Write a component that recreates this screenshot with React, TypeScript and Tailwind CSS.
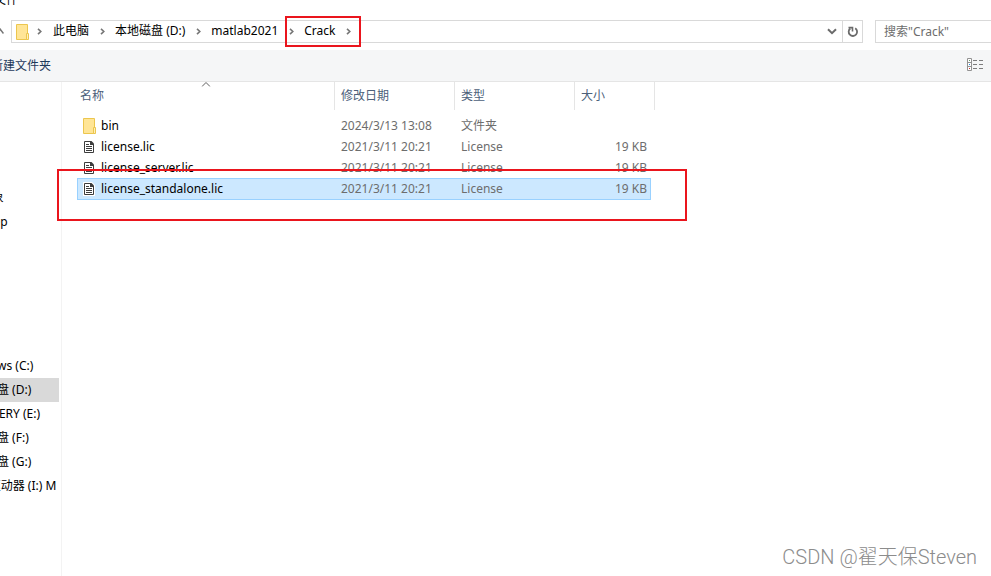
import { useState } from "react";

// ─── data ─────────────────────────────────────────────────────────────────────
const CRUMBS = ["此电脑", "本地磁盘 (D:)", "matlab2021", "Crack"];

const PLACES = ["3D 对象", "Desktop"];

const DRIVES = [
  "Windows (C:)",
  "本地磁盘 (D:)",
  "RECOVERY (E:)",
  "本地磁盘 (F:)",
  "本地磁盘 (G:)",
  "DVD 驱动器 (I:) M",
];

interface FileEntry {
  name: string;
  date: string;
  type: string;
  size: string;
  folder?: boolean;
}

const FILES: FileEntry[] = [
  { name: "bin", date: "2024/3/13 13:08", type: "文件夹", size: "", folder: true },
  { name: "license.lic", date: "2021/3/11 20:21", type: "License", size: "19 KB" },
  { name: "license_server.lic", date: "2021/3/11 20:21", type: "License", size: "19 KB" },
  { name: "license_standalone.lic", date: "2021/3/11 20:21", type: "License", size: "19 KB" },
];

// ─── icons ────────────────────────────────────────────────────────────────────
function FolderIcon() {
  return (
    <svg width="14" height="16" viewBox="0 0 14 16" className="shrink-0">
      <path d="M.5.5h11v15H.5z" fill="#ffe596" stroke="#ecc64e" />
      <path d="M10.5 9.5h2v6h-2z" fill="#fff0b8" stroke="#ecc64e" />
    </svg>
  );
}

function FileIcon() {
  return (
    <svg width="12" height="14" viewBox="0 0 12 14" className="shrink-0">
      <path d="M0 0h9l3 3v11H0z" fill="#fff" />
      <path d="M1.5 1.5h6l3 3v8h-9z" fill="#fff" stroke="#3d3d3d" />
      <path d="M7 1h1.5L11 3.5V5H7z" fill="#3d3d3d" />
      <path d="M3 4.5h3M3 6.5h6M3 8.5h6M3 10.5h6" stroke="#3d3d3d" />
    </svg>
  );
}

function ChevronRight() {
  return (
    <svg width="5" height="7" viewBox="0 0 5 7" fill="none">
      <path d="M1 .8 3.8 3.5 1 6.2" stroke="#767676" strokeWidth="1.6" />
    </svg>
  );
}

function ChevronDown() {
  return (
    <svg width="10" height="7" viewBox="0 0 10 7" fill="none">
      <path d="M1 1.2 5 5.2l4-4" stroke="#6b6b6b" strokeWidth="2" />
    </svg>
  );
}

function RefreshIcon() {
  return (
    <svg width="12" height="12" viewBox="0 0 12 12" fill="none">
      <path d="M8.2 2.3a4.2 4.2 0 1 1-4.9.2" stroke="#6b6b6b" strokeWidth="1.8" />
      <path d="M1.5 1.6h4v4" stroke="#6b6b6b" strokeWidth="1.6" />
    </svg>
  );
}

function ViewIcon() {
  return (
    <svg width="17" height="13" viewBox="0 0 17 13" fill="none">
      <path d="M.5.5h4v12h-4zM.5 4.5h4M.5 8.5h4" fill="#fff" stroke="#929292" />
      <path d="M2 2h1v1H2z" fill="#6b9a6b" />
      <path d="M2 6h1v1H2z" fill="#1e88e5" />
      <path d="M2 10h1v1H2z" fill="#d1332e" />
      <path d="M6 2.5h4M12 2.5h4M6 6.5h4M12 6.5h4M6 10.5h4M12 10.5h4" stroke="#7d7d7d" />
    </svg>
  );
}

// ─── address row ──────────────────────────────────────────────────────────────
function AddressBar() {
  return (
    <div className="flex h-[23px] items-stretch">
      <button aria-label="上移" className="flex w-[11px] shrink-0 items-center">
        <svg width="4" height="7" viewBox="0 0 4 7" fill="none">
          <path d="M-2.5 5.5.2 1.2 3.5 5.5" stroke="#767676" strokeWidth="1.5" />
        </svg>
      </button>

      <nav className="flex flex-1 items-stretch border border-[#d9d9d9] pl-1">
        <div className="flex items-center">
          <FolderIcon />
        </div>
        <span className="flex w-[23px] items-center justify-center pr-1">
          <ChevronRight />
        </span>
        {CRUMBS.map((crumb, i) => (
          <div key={crumb} className="relative flex items-center">
            <a href="#" className="pb-px whitespace-nowrap leading-4">
              {crumb}
            </a>
            <span className="flex w-[26px] items-center justify-center">
              <ChevronRight />
            </span>
            {i === CRUMBS.length - 1 && (
              <div className="pointer-events-none absolute -inset-y-[5px] -left-[19px] right-0 border-2 border-[#ea151d]" />
            )}
          </div>
        ))}
        <button aria-label="以前的位置" className="ml-auto flex w-5 items-center justify-center">
          <ChevronDown />
        </button>
        <button
          aria-label="刷新"
          className="flex w-5 items-center justify-center border-l border-[#d9d9d9]"
        >
          <RefreshIcon />
        </button>
      </nav>

      <input
        type="text"
        aria-label="搜索"
        placeholder={'搜索"Crack"'}
        className="ml-3 w-[116px] shrink-0 border border-r-0 border-[#d9d9d9] px-2 placeholder:text-[#6d6d6d]"
      />
    </div>
  );
}

// ─── navigation pane ──────────────────────────────────────────────────────────
function Sidebar() {
  return (
    <aside className="w-[62px] shrink-0 overflow-hidden border-r border-[#f3f3f3] pt-[104px]">
      <ul>
        {PLACES.map((place) => (
          <li key={place} className="h-6">
            <a href="#" className="-ml-[39px] block whitespace-nowrap leading-6">
              {place}
            </a>
          </li>
        ))}
      </ul>
      <ul className="mt-30 mr-0.5">
        {DRIVES.map((drive, i) => (
          <li key={drive} className={`h-6 overflow-hidden ${i === 1 ? "bg-[#d9d9d9]" : ""}`}>
            <a href="#" className="-ml-[39px] block whitespace-nowrap leading-6">
              {drive}
            </a>
          </li>
        ))}
      </ul>
    </aside>
  );
}

// ─── file list ────────────────────────────────────────────────────────────────
function FileList() {
  const [selected, setSelected] = useState("license_standalone.lic");

  return (
    <main className="relative min-w-0 flex-1 pl-[15px]">
      <table className="w-[578px] table-fixed border-separate border-spacing-0 text-left">
        <colgroup>
          <col className="w-[258px]" />
          <col className="w-30" />
          <col className="w-30" />
          <col className="w-[76px]" />
          <col className="w-1" />
        </colgroup>
        <thead className="text-[#4c607a]">
          <tr className="h-7">
            <th className="relative border-r border-[#e5e5e5] pl-[3px] font-normal">
              名称
              <svg
                width="9"
                height="5"
                viewBox="0 0 9 5"
                fill="none"
                className="absolute top-0 left-1/2 -translate-x-1/2"
              >
                <path d="M.5 4.5l4-4 4 4" stroke="#5f5f5f" />
              </svg>
            </th>
            <th className="border-r border-[#e5e5e5] pl-1.5 font-normal">修改日期</th>
            <th className="border-r border-[#e5e5e5] pl-1.5 font-normal">类型</th>
            <th colSpan={2} className="border-r border-[#e5e5e5] pl-1.5 font-normal">
              大小
            </th>
          </tr>
        </thead>
        <tbody className="text-[#6d6d6d] before:block before:h-[5px]">
          {FILES.map((file) => {
            const active = file.name === selected;
            const cell = active ? "border-y border-[#99d1ff] bg-[#cce8ff]" : "";
            return (
              <tr
                key={file.name}
                className={active ? "h-[22px]" : "h-[21px]"}
                onClick={() => setSelected(file.name)}
              >
                <td className={`text-black ${cell} ${active ? "border-l pl-[5px]" : "pl-1.5"}`}>
                  <div className="flex items-center">
                    <span className="flex w-[18px] shrink-0">
                      {file.folder ? <FolderIcon /> : <FileIcon />}
                    </span>
                    {file.name}
                  </div>
                </td>
                <td className={`pl-1.5 ${cell}`}>{file.date}</td>
                <td className={`pl-1.5 ${cell}`}>{file.type}</td>
                <td className={`text-right ${cell} ${active ? "border-r pr-[3px]" : "pr-1"}`}>
                  {file.size}
                </td>
                <td />
              </tr>
            );
          })}
        </tbody>
      </table>

      {/* highlight box around the selected file */}
      <div className="pointer-events-none absolute top-[87px] -left-[5px] h-[52px] w-[630px] border-2 border-[#ea151d]" />
    </main>
  );
}

// ─── dialog ───────────────────────────────────────────────────────────────────
export default function App() {
  return (
    <div className="relative flex min-h-screen flex-col overflow-hidden bg-white font-['Noto_Sans','Noto_Sans_CJK_SC',sans-serif] text-xs text-black">
      <header className="flex h-5 items-start overflow-hidden">
        <h1 className="-mt-2 -ml-1.5 leading-4">文件</h1>
      </header>

      <AddressBar />

      <div className="mt-[7px] flex h-8 items-center justify-between border-b border-[#e5e5e5] bg-[#f5f6f7] pr-[7px]">
        <button className="-ml-[9px] whitespace-nowrap text-[#1e395b]">新建文件夹</button>
        <button aria-label="更改视图" className="pb-0.5">
          <ViewIcon />
        </button>
      </div>

      <div className="flex flex-1">
        <Sidebar />
        <FileList />
      </div>

      <div className="absolute right-3.5 bottom-[5px] font-['Roboto','Noto_Sans_CJK_SC',sans-serif] text-xl font-light text-[#8c8c8c]">
        CSDN @翟天保Steven
      </div>
    </div>
  );
}
